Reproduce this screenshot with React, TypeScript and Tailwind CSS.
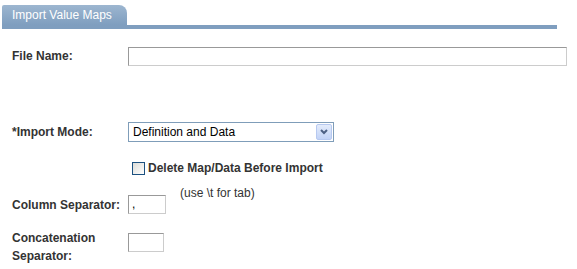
import React from 'react';

function Label({ children }: { children: React.ReactNode }) {
  return <div className="w-[128px] shrink-0 pl-[12px] text-[12px] font-bold text-[#333] leading-[20px]">{children}</div>;
}

function TextBox({ className, children }: { className: string; children?: React.ReactNode }) {
  return (
    <div className={`h-[19px] border border-[#999] border-b-[#ccc] border-r-[#ccc] text-[12px] leading-[16px] pl-[3px] text-black ${className}`}>
      {children}
    </div>
  );
}

export default function App() {
  return (
    <div className="w-[577px] h-[269px] bg-white overflow-hidden font-['Liberation_Sans',Arial,sans-serif]">
      <div className="pt-[5px]">
        <div className="ml-[2px] w-[125px] h-[20px] rounded-tr-[8px] rounded-tl-[2px] bg-gradient-to-b from-[#9db6d0] to-[#7f9ebf] text-white text-[12px] leading-[20px] pl-[10px] whitespace-nowrap">
          Import Value Maps
        </div>
        <div className="ml-[2px] w-[555px] h-[4px] bg-[#7f9ebf]" />
      </div>

      <div className="flex items-center mt-[17px]">
        <Label>File Name:</Label>
        <TextBox className="w-[439px]" />
      </div>

      <div className="flex items-center mt-[56px]">
        <Label>*Import Mode:</Label>
        <div className="w-[206px] h-[20px] border border-[#7f9db9] flex items-center justify-between">
          <span className="pl-[4px] text-[12px] text-black">Definition and Data</span>
          <div className="w-[16px] h-[16px] mr-[1px] rounded-[2px] bg-gradient-to-b from-[#e4ecfb] to-[#c2d3f7] border border-[#b7c9f0] flex items-center justify-center">
            <svg width="8" height="6" viewBox="0 0 8 6">
              <path d="M1 1 L4 4 L7 1" stroke="#4d6185" strokeWidth="2" fill="none" />
            </svg>
          </div>
        </div>
      </div>

      <div className="flex items-center mt-[17px] pl-[132px]">
        <div className="w-[13px] h-[13px] border border-[#1c5180] bg-gradient-to-br from-[#dcdcd7] to-white" />
        <span className="ml-[3px] text-[12px] font-bold text-[#333]">Delete Map/Data Before Import</span>
      </div>

      <div className="flex items-start mt-[18px]">
        <Label>Column Separator:</Label>
        <TextBox className="w-[38px]">,</TextBox>
        <span className="ml-[14px] text-[12px] leading-[14px] text-[#333] -mt-[9px]">(use \t for tab)</span>
      </div>

      <div className="flex items-start mt-[14px]">
        <div className="w-[128px] shrink-0 pl-[12px] text-[12px] font-bold text-[#333] leading-[18px]">
          Concatenation<br />Separator:
        </div>
        <TextBox className="w-[36px] mt-[4px]" />
      </div>
    </div>
  );
}
